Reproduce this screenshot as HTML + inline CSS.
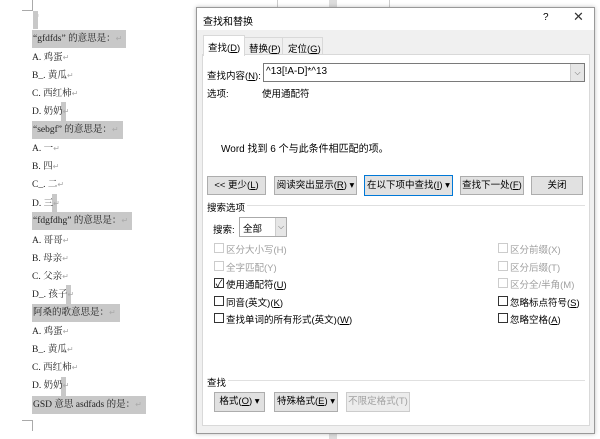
<!DOCTYPE html>
<html><head><meta charset="utf-8"><style>
*{margin:0;padding:0;box-sizing:border-box}
body{width:600px;height:439px;overflow:hidden;background:#fff;position:relative;font-family:"Liberation Sans","Noto Sans CJK SC",sans-serif;font-size:9.5px;color:#000}
.a{position:absolute;white-space:nowrap}
.doc{font-family:"Liberation Serif","Noto Serif CJK SC",serif;font-size:9.5px;color:#222}
.hl{background:#c8c8c8}
.q{padding:0 4px 0 1px}
.ret{color:#aaa;font-size:8px}
.btn{position:absolute;background:#e1e1e1;border:1px solid #adadad;text-align:center;line-height:17px;font-size:9.5px}
.cb{position:absolute;width:10px;height:10px;border:1px solid #333;background:#fff}
.cb.d{border-color:#ccc}
.g{color:#a0a0a0}
</style></head><body>
<div class="a" style="left:22px;top:0;width:11px;height:11px;border-right:1px solid #aaa;border-bottom:1px solid #aaa"></div>
<div class="a" style="left:22px;top:420px;width:11px;height:11px;border-right:1px solid #aaa;border-top:1px solid #aaa"></div>
<div class="a doc ret" style="left:33px;top:12px">↵</div>
<div class="a hl" style="left:33px;top:11px;width:5px;height:18px"></div>
<div class="a doc hl q" style="left:32px;top:30px;height:18px;line-height:18px">“gfdfds” 的意思是：<span class="ret">↵</span></div>
<div class="a doc" style="left:32px;top:49px">A. 鸡蛋<span class="ret">↵</span></div>
<div class="a doc" style="left:32px;top:67px">B_. 黄瓜<span class="ret">↵</span></div>
<div class="a doc" style="left:32px;top:85px">C. 西红柿<span class="ret">↵</span></div>
<div class="a hl" style="left:61px;top:102px;width:5px;height:20px"></div>
<div class="a doc" style="left:32px;top:103px">D. 奶奶<span class="ret">↵</span></div>
<div class="a doc hl q" style="left:32px;top:121px;height:18px;line-height:18px">“sebgf” 的意思是：<span class="ret">↵</span></div>
<div class="a doc" style="left:32px;top:140px">A. 一<span class="ret">↵</span></div>
<div class="a doc" style="left:32px;top:158px">B. 四<span class="ret">↵</span></div>
<div class="a doc" style="left:32px;top:176px">C_. 二<span class="ret">↵</span></div>
<div class="a hl" style="left:52px;top:194px;width:5px;height:20px"></div>
<div class="a doc" style="left:32px;top:195px">D. 三<span class="ret">↵</span></div>
<div class="a doc hl q" style="left:32px;top:212px;height:18px;line-height:18px">“fdgfdhg” 的意思是：<span class="ret">↵</span></div>
<div class="a doc" style="left:32px;top:232px">A. 哥哥<span class="ret">↵</span></div>
<div class="a doc" style="left:32px;top:250px">B. 母亲<span class="ret">↵</span></div>
<div class="a doc" style="left:32px;top:268px">C. 父亲<span class="ret">↵</span></div>
<div class="a hl" style="left:66px;top:285px;width:5px;height:20px"></div>
<div class="a doc" style="left:32px;top:286px">D_. 孩子<span class="ret">↵</span></div>
<div class="a doc hl q" style="left:32px;top:304px;height:18px;line-height:18px">阿桑的歌意思是：<span class="ret">↵</span></div>
<div class="a doc" style="left:32px;top:323px">A. 鸡蛋<span class="ret">↵</span></div>
<div class="a doc" style="left:32px;top:341px">B_. 黄瓜<span class="ret">↵</span></div>
<div class="a doc" style="left:32px;top:359px">C. 西红柿<span class="ret">↵</span></div>
<div class="a hl" style="left:61px;top:377px;width:5px;height:20px"></div>
<div class="a doc" style="left:32px;top:377px">D. 奶奶<span class="ret">↵</span></div>
<div class="a doc hl q" style="left:32px;top:396px;height:18px;line-height:18px">GSD 意思 asdfads 的是：<span class="ret">↵</span></div>
<div class="a" style="left:277px;top:0;width:1px;height:8px;background:#ccc"></div>
<div class="a" style="left:329px;top:0;width:8px;height:8px;background:#ddd"></div>
<div class="a" style="left:389px;top:0;width:1px;height:8px;background:#ccc"></div>
<div class="a" style="left:329px;top:433px;width:8px;height:6px;background:#ddd"></div>
<div class="a" style="left:196px;top:7px;width:399px;height:427px;background:#f0f0f0;border:1px solid #999;box-shadow:0 0 4px rgba(0,0,0,.25)"></div>
<div class="a" style="left:197px;top:8px;width:397px;height:22px;background:#fff"></div>
<div class="a" style="left:203px;top:13px;font-size:10px">查找和替换</div>
<div class="a" style="left:543px;top:12px;font-size:10px">?</div>
<div class="a" style="left:573px;top:9px;font-size:13px;color:#333">✕</div>
<div class="a" style="left:244px;top:37px;width:39px;height:18px;border:1px solid #d9d9d9;background:#f0f0f0"></div>
<div class="a" style="left:282px;top:37px;width:41px;height:18px;border:1px solid #d9d9d9;background:#f0f0f0"></div>
<div class="a" style="left:202px;top:54px;width:388px;height:372px;background:#fff;border:1px solid #d9d9d9"></div>
<div class="a" style="left:203px;top:35px;width:42px;height:21px;background:#fff;border:1px solid #d9d9d9;border-bottom:none"></div>
<div class="a" style="left:208px;top:40px">查找(<u>D</u>)</div>
<div class="a" style="left:249px;top:41px">替换(<u>P</u>)</div>
<div class="a" style="left:288px;top:41px">定位(<u>G</u>)</div>
<div class="a" style="left:207px;top:68px">查找内容(<u>N</u>):</div>
<div class="a" style="left:263px;top:63px;width:322px;height:19px;border:1px solid #7a7a7a;background:#fff"></div>
<div class="a" style="left:266px;top:66px;font-size:10px">^13[!A-D]*^13</div>
<div class="a" style="left:570px;top:64px;width:14px;height:17px;background:#e6e6e6;border-left:1px solid #ccc;text-align:center;font-size:8px;color:#666;line-height:17px">⌵</div>
<div class="a" style="left:207px;top:86px">选项:</div>
<div class="a" style="left:262px;top:86px">使用通配符</div>
<div class="a" style="left:221px;top:140px;font-size:10px">Word 找到 6 个与此条件相匹配的项。</div>
<div class="btn" style="left:207px;top:176px;width:59px;height:19px">&lt;&lt; 更少(<u>L</u>)</div>
<div class="btn" style="left:274px;top:176px;width:83px;height:19px">阅读突出显示(<u>R</u>) ▾</div>
<div class="btn" style="left:364px;top:175px;width:89px;height:21px;border:1px solid #0078d7;line-height:19px">在以下项中查找(<u>I</u>) ▾</div>
<div class="btn" style="left:460px;top:176px;width:64px;height:19px">查找下一处(<u>F</u>)</div>
<div class="btn" style="left:531px;top:176px;width:52px;height:19px">关闭</div>
<div class="a" style="left:207px;top:200px">搜索选项</div>
<div class="a" style="left:247px;top:205px;width:338px;height:1px;background:#e0e0e0"></div>
<div class="a" style="left:213px;top:222px">搜索:</div>
<div class="a" style="left:239px;top:217px;width:48px;height:20px;border:1px solid #aaa;background:#fff"></div>
<div class="a" style="left:243px;top:221px">全部</div>
<div class="a" style="left:275px;top:218px;width:11px;height:18px;background:#e6e6e6;border-left:1px solid #ccc;text-align:center;font-size:8px;color:#666;line-height:18px">⌵</div>
<div class="cb d" style="left:214px;top:243px"></div><div class="a g" style="left:226px;top:242px">区分大小写(H)</div>
<div class="cb d" style="left:214px;top:261px"></div><div class="a g" style="left:226px;top:260px">全字匹配(Y)</div>
<div class="cb" style="left:214px;top:278px"></div><div class="a" style="left:214px;top:275px;font-size:10px;width:10px;text-align:center">✓</div><div class="a" style="left:226px;top:277px">使用通配符(<u>U</u>)</div>
<div class="cb" style="left:214px;top:296px"></div><div class="a" style="left:226px;top:295px">同音(英文)(<u>K</u>)</div>
<div class="cb" style="left:214px;top:313px"></div><div class="a" style="left:226px;top:312px">查找单词的所有形式(英文)(<u>W</u>)</div>
<div class="cb d" style="left:498px;top:243px"></div><div class="a g" style="left:510px;top:242px">区分前缀(X)</div>
<div class="cb d" style="left:498px;top:261px"></div><div class="a g" style="left:510px;top:260px">区分后缀(T)</div>
<div class="cb d" style="left:498px;top:278px"></div><div class="a g" style="left:510px;top:277px">区分全/半角(M)</div>
<div class="cb" style="left:498px;top:296px"></div><div class="a" style="left:510px;top:295px">忽略标点符号(<u>S</u>)</div>
<div class="cb" style="left:498px;top:313px"></div><div class="a" style="left:510px;top:312px">忽略空格(<u>A</u>)</div>
<div class="a" style="left:207px;top:375px">查找</div>
<div class="a" style="left:228px;top:380px;width:357px;height:1px;background:#e0e0e0"></div>
<div class="btn" style="left:214px;top:392px;width:51px;height:20px">格式(<u>O</u>) ▾</div>
<div class="btn" style="left:274px;top:392px;width:64px;height:20px">特殊格式(<u>E</u>) ▾</div>
<div class="btn g" style="left:346px;top:392px;width:64px;height:20px;background:#ececec;border-color:#ccc">不限定格式(T)</div>
</body></html>
